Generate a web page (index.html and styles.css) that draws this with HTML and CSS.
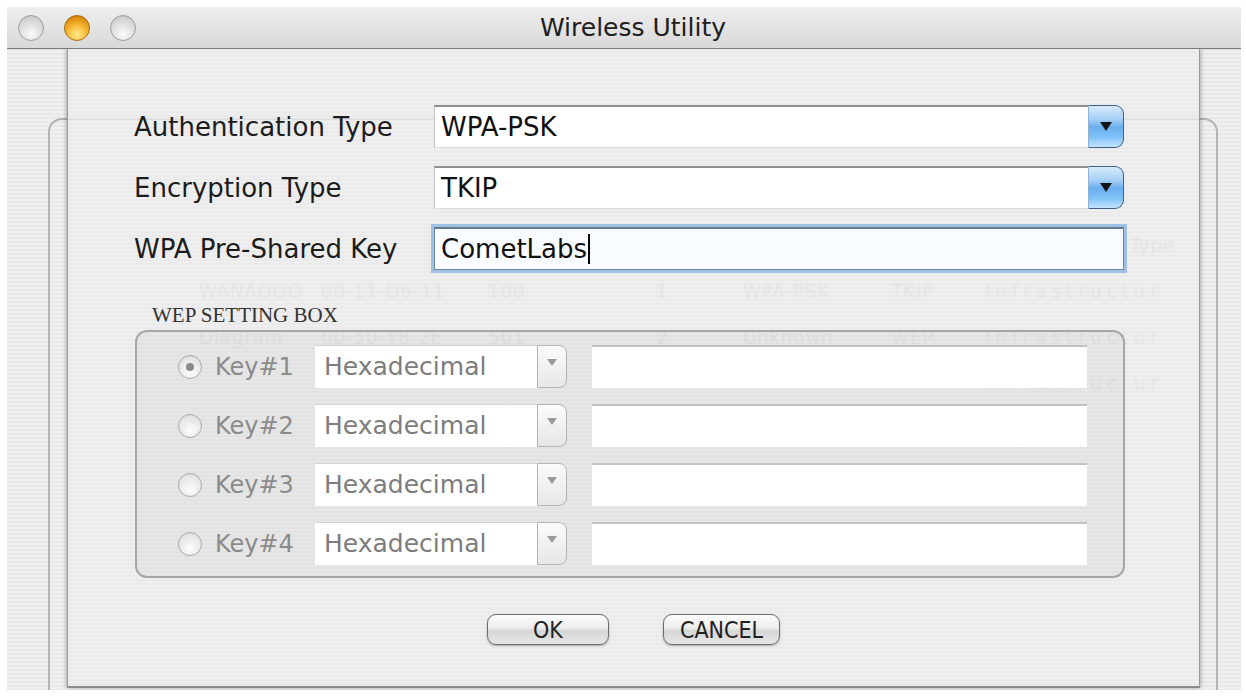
FILE: index.html
```html
<!DOCTYPE html>
<html>
<head>
<meta charset="utf-8">
<title>Wireless Utility</title>
<link rel="stylesheet" href="styles.css">
</head>
<body>
<div class="screen">
  <div class="window">
    <div class="titlebar">
      <div class="lights">
        <span class="light gray"></span>
        <span class="light orange"></span>
        <span class="light gray"></span>
      </div>
      <div class="title">Wireless Utility</div>
    </div>
    <div class="content">
      <div class="bgbox">
        <div class="ghost">
          <span></span><span></span><span></span><span></span><span></span><span></span><span class="ghead">Type</span>
          <span>WANAOOO</span><span>00-11-D6-11</span><span>100</span><span>1</span><span>WPA-PSK</span><span>TKIP</span><span class="wide">Infrastructur</span>
          <span>Diagram</span><span>00-50-18-2E</span><span>501</span><span>2</span><span>Unknown</span><span>WEP</span><span class="wide">Infrastructur</span>
          <span></span><span></span><span></span><span></span><span></span><span></span><span class="wide">Infrastructur</span>
        </div>
      </div>
      <div class="sheet">
        <div class="form">
          <div class="lbl">Authentication Type</div>
          <div class="popup"><span class="val">WPA-PSK</span><span class="blue"><span class="tri"></span></span></div>
          <div class="lbl">Encryption Type</div>
          <div class="popup"><span class="val">TKIP</span><span class="blue"><span class="tri"></span></span></div>
          <div class="lbl">WPA Pre-Shared Key</div>
          <div class="focusfield">CometLabs<span class="caret"></span></div>
        </div>
        <div class="wep-title">WEP SETTING BOX</div>
        <div class="wep-box">
          <div class="key-row">
            <span class="radio checked"></span><span class="key-lbl">Key#1</span>
            <div class="dpopup"><span class="dval">Hexadecimal</span><span class="darrow"></span></div>
            <div class="dfield"></div>
          </div>
          <div class="key-row">
            <span class="radio"></span><span class="key-lbl">Key#2</span>
            <div class="dpopup"><span class="dval">Hexadecimal</span><span class="darrow"></span></div>
            <div class="dfield"></div>
          </div>
          <div class="key-row">
            <span class="radio"></span><span class="key-lbl">Key#3</span>
            <div class="dpopup"><span class="dval">Hexadecimal</span><span class="darrow"></span></div>
            <div class="dfield"></div>
          </div>
          <div class="key-row">
            <span class="radio"></span><span class="key-lbl">Key#4</span>
            <div class="dpopup"><span class="dval">Hexadecimal</span><span class="darrow"></span></div>
            <div class="dfield"></div>
          </div>
        </div>
        <div class="buttons">
          <button class="btn ok">OK</button>
          <button class="btn cancel">CANCEL</button>
        </div>
      </div>
    </div>
  </div>
</div>
</body>
</html>
```
FILE: styles.css
```css
html, body {
  margin: 0;
  background: #fff;
  font-family: "DejaVu Sans", "Noto Sans", sans-serif;
}

.screen {
  width: 1246px;
  height: 696px;
  padding: 7px 5px 0 7px;
  box-sizing: border-box;
  overflow: hidden;
}

.window {
  width: 1234px;
  height: 683px;
  display: flex;
  flex-direction: column;
  background: repeating-linear-gradient(to bottom, #f0f0f0 0 2px, #e8e8e8 2px 4px);
}

.titlebar {
  flex: none;
  height: 42px;
  box-sizing: border-box;
  display: grid;
  align-items: center;
  background: linear-gradient(#eeeeee, #d9d9d9);
  border-bottom: 1px solid #7a7a7a;
}

.lights,
.title {
  grid-area: 1 / 1;
}

.lights {
  display: flex;
  gap: 20px;
  padding-left: 11px;
  align-items: center;
}

.light {
  width: 26px;
  height: 26px;
  border-radius: 50%;
  box-sizing: border-box;
}

.light.gray {
  border: 1px solid #9d9d9d;
  background: radial-gradient(circle at 50% 75%, #fbfbfb 0%, #dcdcdc 55%, #bdbdbd 100%);
}

.light.orange {
  border: 1px solid #a66a0c;
  background: radial-gradient(circle at 50% 78%, #ffec8f 0%, #f8bd3a 40%, #dd8c0c 78%, #b86e06 100%);
}

.title {
  text-align: center;
  padding-left: 18px;
  font-size: 25px;
  color: #202020;
}

.content {
  flex: 1;
  position: relative;
  overflow: hidden;
}

.bgbox {
  margin: 69px 0 0 41px;
  width: 1170px;
  height: 700px;
  box-sizing: border-box;
  border: 2px solid #b3b3b3;
  border-radius: 14px;
}

.ghost {
  display: grid;
  grid-template-columns: 122px 167px 168px 87px 148px 94px 190px;
  padding: 102px 0 0 149px;
  font-family: "DejaVu Sans Condensed", "DejaVu Sans", sans-serif;
  font-size: 20px;
  line-height: 46px;
  letter-spacing: 1px;
  color: #c6c6c6;
  white-space: nowrap;
}

.ghost .ghead {
  text-align: right;
}

.ghost .wide {
  letter-spacing: 5px;
}

.sheet {
  position: absolute;
  left: 60px;
  top: 0;
  width: 1133px;
  height: 639px;
  box-sizing: border-box;
  padding: 56px 75px 0 66px;
  background: repeating-linear-gradient(to bottom, rgba(240, 240, 240, 0.8) 0 2px, rgba(233, 233, 233, 0.8) 2px 4px);
  border-left: 1px solid #9a9a9a;
  border-right: 1px solid #9a9a9a;
  border-bottom: 2px solid #8a8a8a;
  box-shadow: -2px 0 3px rgba(0, 0, 0, 0.18), 2px 0 3px rgba(0, 0, 0, 0.18);
}

.form {
  display: grid;
  grid-template-columns: 300px 1fr;
  grid-auto-rows: 43px;
  row-gap: 18px;
  align-items: center;
}

.lbl {
  font-size: 26px;
  color: #1c1c1c;
  white-space: nowrap;
}

.popup {
  display: flex;
  height: 43px;
}

.popup .val {
  flex: 1;
  background: #fff;
  border-top: 2px solid #909090;
  border-left: 1px solid #c4c4c4;
  border-bottom: 1px solid #dcdcdc;
  padding-left: 6px;
  font-size: 26px;
  line-height: 40px;
  color: #111;
}

.blue {
  width: 36px;
  box-sizing: border-box;
  border: 1px solid #3e5f86;
  border-left-color: #8fb3d8;
  border-radius: 0 9px 9px 0;
  background: linear-gradient(to bottom, #d7ebfb 0%, #a6d0f6 32%, #6aaeef 52%, #80c2f7 76%, #c3e4fd 100%);
  display: flex;
  align-items: center;
  justify-content: center;
}

.tri {
  width: 0;
  height: 0;
  border-left: 6px solid transparent;
  border-right: 6px solid transparent;
  border-top: 9px solid #141414;
}

.focusfield {
  height: 43px;
  box-sizing: border-box;
  background: #f8fbff;
  border: 1px solid #6e88a6;
  border-top: 2px solid #65798f;
  box-shadow: 0 0 0 3px #9ec0e3;
  padding-left: 6px;
  font-size: 26px;
  line-height: 40px;
  color: #111;
  display: flex;
  align-items: center;
}

.caret {
  display: inline-block;
  width: 2px;
  height: 30px;
  background: #000;
  margin-left: 1px;
}

.wep-title {
  margin: 35px 0 0 18px;
  font-family: "Liberation Serif", "DejaVu Serif", serif;
  font-size: 21px;
  line-height: 20px;
  color: #333;
}

.wep-box {
  margin: 5px 0 0 1px;
  width: 990px;
  height: 248px;
  box-sizing: border-box;
  border: 2px solid #a6a6a6;
  border-radius: 12px;
  padding: 13px 0 11px;
  background: rgba(0, 0, 0, 0.03);
  display: flex;
  flex-direction: column;
  gap: 16px;
}

.key-row {
  display: flex;
  align-items: center;
  height: 43px;
  padding-left: 41px;
}

.radio {
  width: 24px;
  height: 24px;
  box-sizing: border-box;
  border-radius: 50%;
  border: 1px solid #ababab;
  background: radial-gradient(circle at 50% 70%, #fdfdfd 0%, #e4e4e4 70%, #cfcfcf 100%);
  margin-right: 13px;
  display: flex;
  align-items: center;
  justify-content: center;
}

.radio.checked::after {
  content: "";
  width: 8px;
  height: 8px;
  border-radius: 50%;
  background: #8a8a8a;
}

.key-lbl {
  width: 100px;
  font-size: 24px;
  color: #8b8b8b;
}

.dpopup {
  display: flex;
  width: 252px;
  height: 43px;
}

.dval {
  flex: 1;
  background: #fff;
  border-top: 1px solid #d4d4d4;
  padding-left: 9px;
  font-size: 25px;
  line-height: 42px;
  color: #7d7d7d;
}

.darrow {
  width: 30px;
  box-sizing: border-box;
  border: 1px solid #b4b4b4;
  border-radius: 0 8px 8px 0;
  background: linear-gradient(#fbfbfb, #e7e7e7);
  display: flex;
  align-items: center;
  justify-content: center;
}

.darrow::after {
  content: "";
  width: 0;
  height: 0;
  margin-bottom: 8px;
  border-left: 5px solid transparent;
  border-right: 5px solid transparent;
  border-top: 7px solid #9a9a9a;
}

.dfield {
  margin-left: 25px;
  width: 495px;
  height: 43px;
  box-sizing: border-box;
  background: #fff;
  border-top: 2px solid #c2c2c2;
}

.buttons {
  display: flex;
  justify-content: center;
  gap: 54px;
  margin-top: 36px;
  padding-left: 9px;
}

.btn {
  height: 31px;
  box-sizing: border-box;
  border: 1px solid #6d6d6d;
  border-radius: 9px;
  background: linear-gradient(#fdfdfd 0%, #ececec 45%, #d6d6d6 55%, #e6e6e6 100%);
  box-shadow: 0 1px 2px rgba(0, 0, 0, 0.3);
  font-family: "DejaVu Sans Condensed", "DejaVu Sans", sans-serif;
  font-size: 23px;
  line-height: 28px;
  color: #222;
  padding: 0;
}

.btn.ok {
  width: 122px;
}

.btn.cancel {
  width: 117px;
}
```
